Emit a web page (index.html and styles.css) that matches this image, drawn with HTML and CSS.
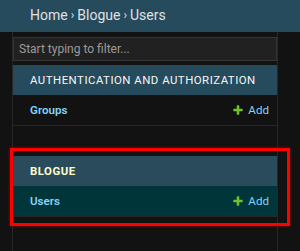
FILE: index.html
```html
<!DOCTYPE html>
<html lang="en">
<head>
<meta charset="utf-8">
<title>Users</title>
<link rel="stylesheet" href="styles.css">
</head>
<body>
<div class="breadcrumbs"><a class="crumb">Home</a><span class="sep">›</span><a class="crumb">Blogue</a><span class="sep">›</span><span class="crumb">Users</span></div>
<div class="main">
  <div class="toggle"></div>
  <nav class="sidebar">
    <input class="filter" type="search" placeholder="Start typing to filter...">
    <div class="module">
      <div class="caption">Authentication and Authorization</div>
      <div class="row">
        <a class="model">Groups</a>
        <a class="add"><svg class="plus" viewBox="0 0 1792 1792"><path d="M1600 796v192q0 40-28 68t-68 28h-416v416q0 40-28 68t-68 28h-192q-40 0-68-28t-28-68v-416h-416q-40 0-68-28t-28-68v-192q0-40 28-68t68-28h416v-416q0-40 28-68t68-28h192q40 0 68 28t28 68v416h416q40 0 68 28t28 68z"/></svg>Add</a>
      </div>
    </div>
    <div class="module current">
      <div class="caption">Blogue</div>
      <div class="row selected">
        <a class="model">Users</a>
        <a class="add"><svg class="plus" viewBox="0 0 1792 1792"><path d="M1600 796v192q0 40-28 68t-68 28h-416v416q0 40-28 68t-68 28h-192q-40 0-68-28t-28-68v-416h-416q-40 0-68-28t-28-68v-192q0-40 28-68t68-28h416v-416q0-40 28-68t68-28h192q40 0 68 28t28 68v416h416q40 0 68 28t28 68z"/></svg>Add</a>
      </div>
      <div class="highlight"></div>
    </div>
  </nav>
  <div class="content"></div>
</div>
</body>
</html>
```

FILE: styles.css
```css
* { box-sizing: border-box; }
html, body {
  margin: 0;
  padding: 0;
  background: #121212;
  height: 100%;
  overflow: hidden;
}
body {
  font-family: Roboto, "Liberation Sans", Arial, sans-serif;
  color: #eeeeee;
}
.breadcrumbs {
  background: #264b5d;
  height: 32px;
  padding: 0 0 2px 30px;
  display: flex;
  align-items: center;
  font-size: 14px;
  color: #e0e0e0;
}
.crumb { color: #e0e0e0; }
.sep {
  margin: 0 3px;
  font-size: 12px;
}
.main {
  display: flex;
  height: 219px;
}
.toggle {
  width: 13px;
  flex: none;
  border-right: 1px solid #272727;
  background: #121212;
}
.sidebar {
  width: 265px;
  flex: none;
  border-right: 1px solid #272727;
  background: #121212;
  padding-top: 5px;
}
.filter {
  display: block;
  width: 100%;
  height: 24px;
  margin: 0 0 4px;
  padding: 2px 5px;
  border: 1px solid #353535;
  background: #212121;
  color: #eeeeee;
  font-family: Roboto, "Liberation Sans", Arial, sans-serif;
  font-size: 12px;
  outline: none;
}
.filter::placeholder { color: #9a9a9a; }
.module {
  position: relative;
  margin-bottom: 30px;
}
.caption {
  background: #264b5d;
  color: #f7f7f7;
  height: 30px;
  padding: 0 17px;
  display: flex;
  align-items: center;
  font-size: 11.4px;
  letter-spacing: 0.5px;
  text-transform: uppercase;
}
.current .caption {
  background: #2a4b5c;
  color: #ffffcc;
  font-weight: 700;
}
.row {
  height: 31px;
  border-bottom: 1px solid #272727;
  display: flex;
  align-items: center;
  justify-content: space-between;
  padding: 0 8px 0 17px;
  font-size: 11.6px;
}
.row.selected { background: #00363a; }
.model {
  color: #81d4fa;
  font-weight: 600;
}
.add {
  color: #81d4fa;
  display: flex;
  align-items: center;
}
.plus {
  width: 12px;
  height: 12px;
  fill: #70bf2b;
  margin-right: 4px;
}
.highlight {
  position: absolute;
  top: -8px;
  left: -3px;
  right: -13px;
  bottom: -9px;
  border: 3px solid #ff0000;
  box-shadow: 0 0 3px rgba(255, 0, 0, 0.5);
}
.content { flex: 1; }
```
